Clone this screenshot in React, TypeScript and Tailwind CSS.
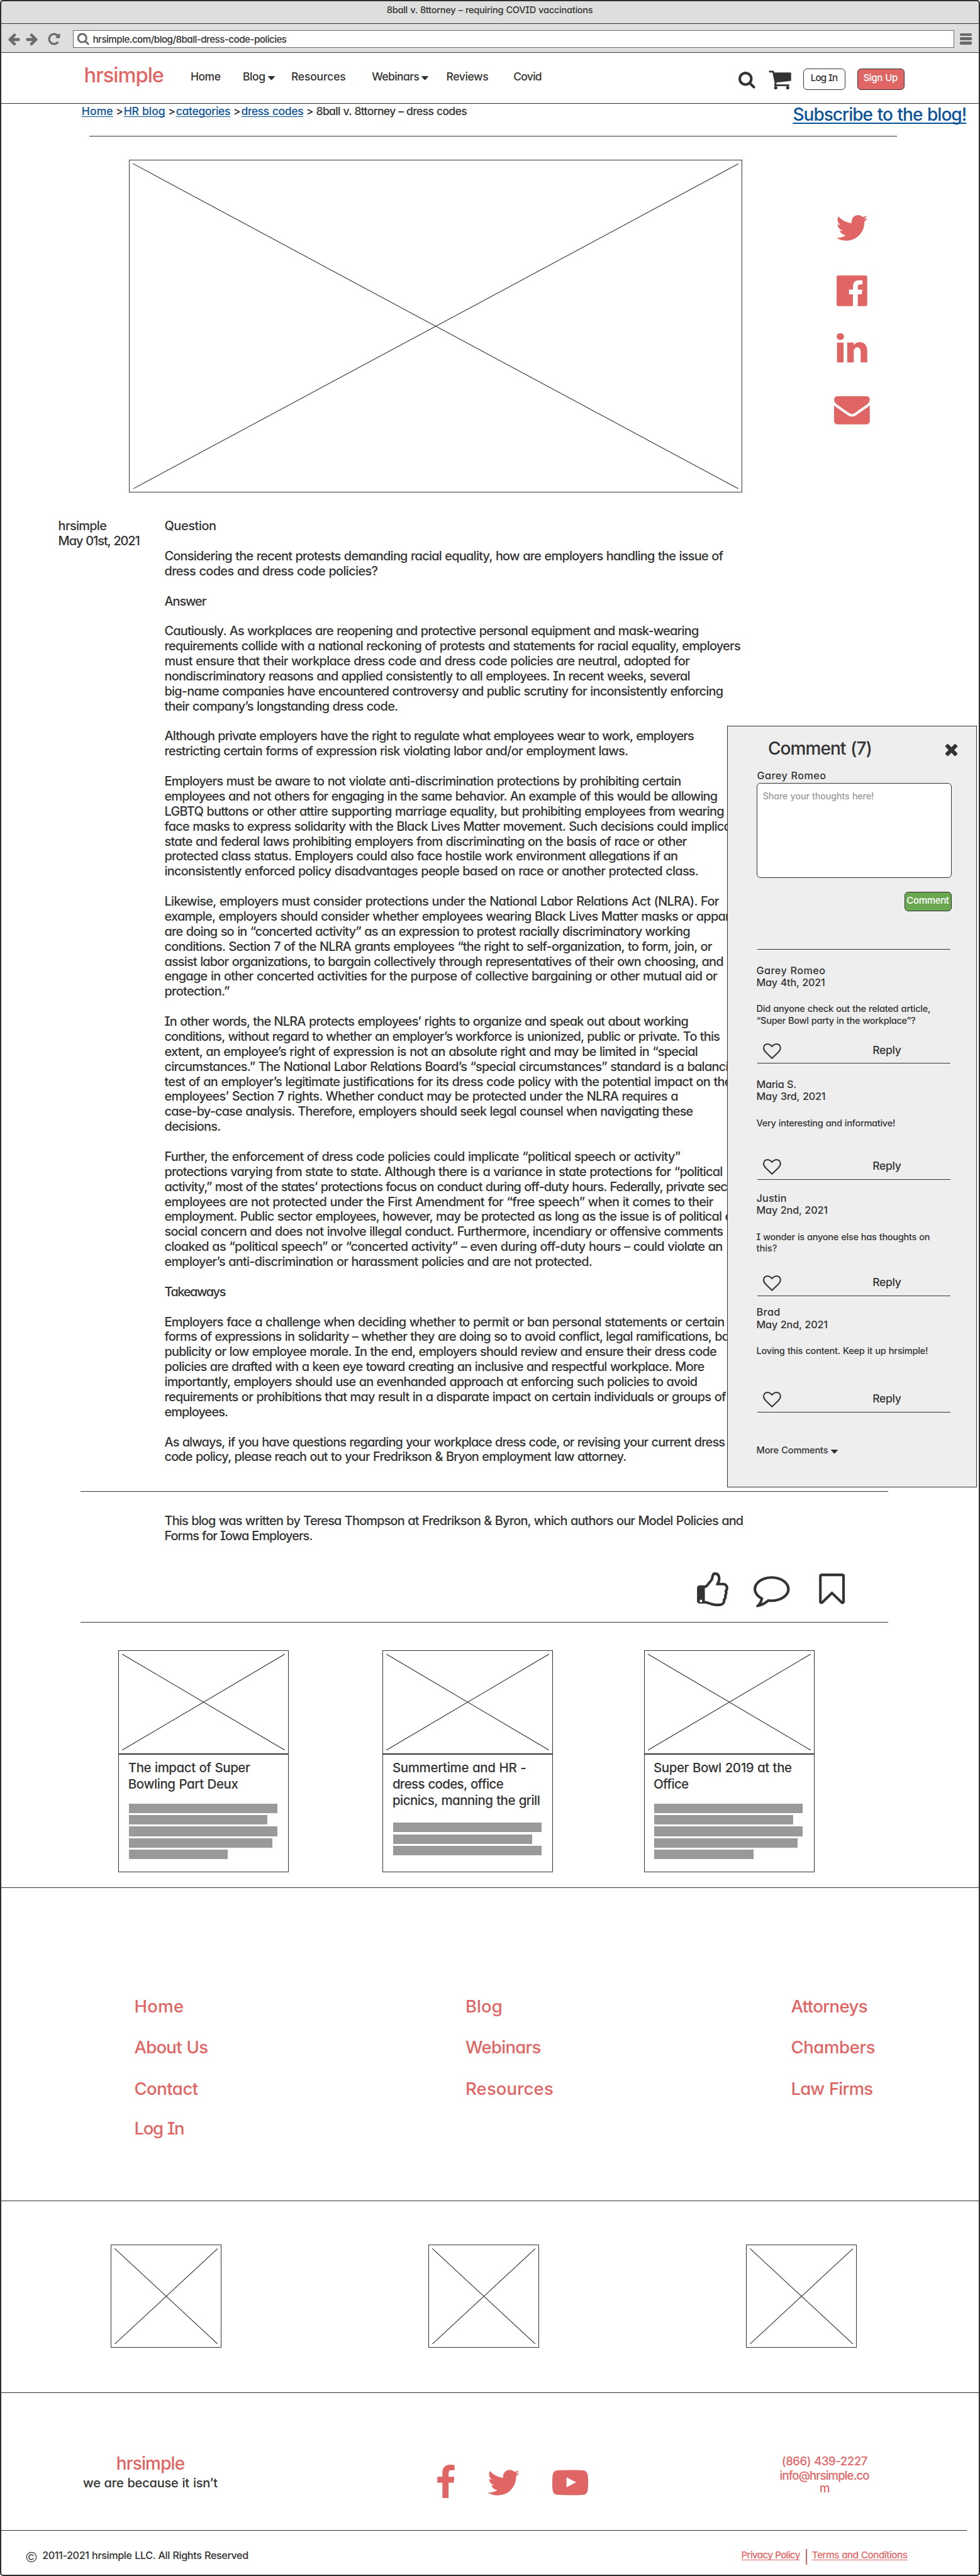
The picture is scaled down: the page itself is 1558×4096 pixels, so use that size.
import { useLayoutEffect, useRef } from "react";
import type { ReactNode } from "react";

const ICONS = {
  arrowLeft:
    "M1664 896v128q0 53-32.500 90.500t-84.500 37.500h-704l293 294q38 36 38 90t-38 90l-75 76q-37 37-90 37-52 0-91-37l-651-652q-37-37-37-90 0-52 37-91l651-650q38-38 91-38 52 0 90 38l75 74q38 38 38 91t-38 91l-293 293h704q52 0 84.500 37.500t32.500 90.500z",
  reload:
    "M1664 256v448q0 26-19 45t-45 19h-448q-42 0-59-40-17-39 14-69l138-138q-148-137-349-137-104 0-198.500 40.500t-163.500 109.500-109.500 163.500-40.500 198.500 40.500 198.500 109.500 163.500 163.500 109.500 198.500 40.500q119 0 225-52t179-147q7-10 23-12 15 0 25 9l137 138q9 8 9.500 20.500t-7.500 22.500q-109 132-264 204.500t-327 72.500q-156 0-298-61t-245-164-164-245-61-298 61-298 164-245 245-164 298-61q147 0 284.500 55.500t244.500 156.500l130-129q29-31 70-14 39 17 39 59z",
  search:
    "M1216 832q0-185-131.500-316.500t-316.500-131.500-316.500 131.500-131.500 316.500 131.500 316.500 316.500 131.500 316.500-131.500 131.500-316.500zm512 832q0 52-38 90t-90 38q-54 0-90-38l-343-342q-179 124-399 124-143 0-273.500-55.500t-225-150-150-225-55.500-273.500 55.500-273.500 150-225 225-150 273.500-55.500 273.500 55.500 225 150 150 225 55.500 273.500q0 220-124 399l343 343q37 37 37 90z",
  cart:
    "M704 1536q0 52-38 90t-90 38-90-38-38-90 38-90 90-38 90 38 38 90zm896 0q0 52-38 90t-90 38-90-38-38-90 38-90 90-38 90 38 38 90zm128-1088v512q0 24-16.500 42.500t-40.500 21.500l-1044 122q13 60 13 70 0 16-24 64h920q26 0 45 19t19 45-19 45-45 19h-1024q-26 0-45-19t-19-45q0-11 8-31.500t16-36 21.500-40 15.500-29.500l-177-823h-204q-26 0-45-19t-19-45 19-45 45-19h256q16 0 28.500 6.500t19.500 15.500 13 24.500 8 26 5.500 29.500 4.500 26h1201q26 0 45 19t19 45z",
  twitter:
    "M1684 408q-67 98-162 167 1 14 1 42 0 130-38 259.500t-115.500 248.500-184.500 210.500-258 146-323 54.500q-271 0-496-145 35 4 78 4 225 0 401-138-105-2-188-64.500t-114-159.500q33 5 61 5 43 0 85-11-112-23-185.500-111.500t-73.500-205.500v-4q68 38 146 41-66-44-105-115t-39-154q0-88 44-163 121 149 294.500 238.500t371.500 99.500q-8-38-8-74 0-134 94.500-228.500t228.500-94.500q140 0 236 102 109-21 205-78-37 115-142 178 93-10 186-50z",
  facebookSquare:
    "M1579 128q35 0 60 25t25 60v1366q0 35-25 60t-60 25h-391v-595h199l30-232h-229v-148q0-56 23.500-84t91.500-28l122-1v-207q-63-9-178-9-136 0-217.500 80t-81.500 226v171h-200v232h200v595h-735q-35 0-60-25t-25-60v-1366q0-35 25-60t60-25h1366z",
  linkedin:
    "M477 625v991h-330v-991h330zm21-306q1 73-50.500 122t-135.500 49h-2q-82 0-132-49t-50-122q0-74 51.500-122.500t134.500-48.500 133 48.500 51 122.500zm1166 729v568h-329v-530q0-105-40.500-164.500t-126.500-59.500q-63 0-105.500 34.500t-63.500 85.500q-11 30-11 81v553h-329q2-399 2-647t-1-296l-1-48h329v144h-2q20-32 41-56t56.500-52 87-43.500 114.500-15.500q171 0 275 113.500t104 332.500z",
  envelope:
    "M1792 710v794q0 66-47 113t-113 47h-1472q-66 0-113-47t-47-113v-794q44 49 101 87 362 246 497 345 57 42 92.500 65.500t94.500 48 110 24.500h2q51 0 110-24.500t94.500-48 92.500-65.500q170-123 498-345 57-39 100-87zm0-294q0 79-49 151t-122 123q-376 261-468 325-10 7-42.500 31t-54 38-52 31.500-57.500 27-50 9h-2q-23 0-50-9t-57.500-27-52-31.500-54-38-42.500-31q-91-64-262-182.500t-205-142.500q-62-42-117-115.500t-55-136.500q0-78 41.500-130t118.500-52h1472q65 0 112.500 47t47.500 113z",
  times:
    "M1490 1322q0 40-28 68l-136 136q-28 28-68 28t-68-28l-294-294-294 294q-28 28-68 28t-68-28l-136-136q-28-28-28-68t28-68l294-294-294-294q-28-28-28-68t28-68l136-136q28-28 68-28t68 28l294 294 294-294q28-28 68-28t68 28l136 136q28 28 28 68t-28 68l-294 294 294 294q28 28 28 68z",
  heart:
    "M1664 596q0-81-21.500-143t-55-98.500-81.500-59.500-94-31-98-8-112 25.500-110.500 64-86.500 72-60 61.500q-18 22-49 22t-49-22q-24-28-60-61.500t-86.500-72-110.500-64-112-25.500-98 8-94 31-81.500 59.500-55 98.500-21.500 143q0 168 187 355l581 560 580-559q188-188 188-356zm128 0q0 221-229 450l-623 600q-18 18-44 18t-44-18l-624-602q-10-8-27.500-26t-55.500-65.500-68-97.500-53.500-121-23.500-138q0-220 127-344t351-124q62 0 126.500 21.500t120 58 95.500 68.500 76 68q36-36 76-68t95.500-68.500 120-58 126.500-21.500q224 0 351 124t127 344z",
  thumb:
    "M384 1472q0-26-19-45t-45-19-45 19-19 45 19 45 45 19 45-19 19-45zm1152-640q0-51-39-89.500t-89-38.500h-352q0-58 48-159.500t48-160.500q0-98-32-145t-128-47q-26 26-38 85t-30.500 125.500-59.500 109.500q-22 23-77 91-4 5-23 30t-31.500 41-34.500 42.500-40 44-38.500 35.500-40 27-35.500 9h-32v640h32q13 0 31.500 3t33 6.500 38 11 35 11.500 35.500 12.500 29 10.500q211 73 342 73h121q192 0 192-167 0-26-5-56 30-16 47.500-52.500t17.500-73.500-18-69q53-50 53-119 0-25-10-55.500t-25-47.500q32-1 53.500-47t21.500-81zm128-1q0 89-49 163 9 33 9 69 0 77-38 144 3 21 3 43 0 101-60 178 1 139-85 219.500t-227 80.500h-129q-96 0-189.500-22.500t-216.500-65.500q-116-40-138-40h-288q-53 0-90.500-37.500t-37.500-90.500v-640q0-53 37.500-90.500t90.500-37.500h274q36-24 137-155 58-75 107-128 24-25 35.500-85.500t30.500-126.500 62-108q39-37 90-37 84 0 151 32.500t102 101.500 35 186q0 93-48 192h176q104 0 180 76t76 179z",
  comment:
    "M896 384q-204 0-381.500 69.500t-282 187.500-104.500 255q0 112 71.500 213.500t201.500 175.500l87 50-27 96q-24 91-70 172 152-63 275-171l43-38 57 6q69 8 130 8 204 0 381.500-69.500t282-187.500 104.500-255-104.500-255-282-187.500-381.500-69.500zm896 512q0 174-120 321.500t-326 233-450 85.500q-70 0-145-8-198 175-460 242-49 14-114 22h-5q-15 0-27-10.500t-16-27.500v-1q-3-4-.5-12t2-10 4.500-9.500l6-9 7-8.500 8-9q7-8 31-34.500t34.500-38 31-39.500 32.500-51 27-59 26-76q-157-89-247.500-220t-90.500-281q0-130 71-248.500t191-204.500 286-136.500 348-50.500 348 50.500 286 136.500 191 204.500 71 248.500z",
  bookmark:
    "M1408 256h-1024v1242l423-406 89-85 89 85 423 406v-1242zm12-128q23 0 44 9 33 13 52.500 41t19.500 62v1289q0 34-19.500 62t-52.500 41q-19 8-44 8-48 0-83-32l-441-424-441 424q-36 33-83 33-23 0-44-9-33-13-52.500-41t-19.500-62v-1289q0-34 19.500-62t52.500-41q21-9 44-9h1048z",
  facebook:
    "M1343 12v264h-157q-86 0-116 36t-30 108v189h293l-39 296h-254v759h-306v-759h-255v-296h255v-218q0-186 104-288.500t277-102.500q147 0 228 12z",
  youtube:
    "M711 1128l484-250-484-253v503zm185-862q168 0 324.500 4.500t229.500 9.500l73 4q1 0 17 1.500t23 3 23.500 4.500 28.500 8 28 13 31 19.500 29 26.500q6 6 15.500 18.500t29 58.500 26.500 101q8 64 12.500 136.500t5.500 113.500v40 136q1 145-18 290-7 55-25 99.500t-32 61.500l-14 17q-14 15-29 26.500t-31 19-28 12.500-28.500 8-24 4.500-23 3-16.500 1.500q-251 19-627 19-207-2-359.500-6.500t-200.500-7.500l-49-4-36-4q-36-5-54.500-10t-51-21-56.500-41q-6-6-15.500-18.500t-29-58.500-26.500-101q-8-64-12.500-136.500t-5.500-113.500v-40-136q-1-145 18-290 7-55 25-99.500t32-61.500l14-17q14-15 29-26.500t31-19.500 28-13 28.500-8 23.500-4.500 23-3 17-1.500q251-18 627-18z",
};

function Icon({ name, className = "" }: { name: keyof typeof ICONS; className?: string }) {
  return (
    <svg viewBox="0 0 1792 1792" fill="currentColor" className={"block shrink-0 overflow-visible " + className}>
      <path d={ICONS[name]} />
    </svg>
  );
}

/** One line of text, tracked so that its ink spans `w` pixels. */
function T({ w, className = "", ink = "", children }: { w: number; className?: string; ink?: string; children: string }) {
  const ref = useRef<HTMLSpanElement>(null);
  useLayoutEffect(() => {
    const el = ref.current;
    if (!el || children.length < 2) return;
    el.style.letterSpacing = "0px";
    const natural = el.getBoundingClientRect().width;
    const size = parseFloat(getComputedStyle(el).fontSize);
    el.style.letterSpacing = (w + size * 0.1 - natural) / (children.length - 1) + "px";
  }, [w, children]);
  return (
    <span className={"block shrink-0 whitespace-nowrap " + className} style={{ width: w }}>
      <span ref={ref} className={"-ml-px [word-spacing:.04em] " + ink}>
        {children}
      </span>
    </span>
  );
}

function CrossBox({ className = "" }: { className?: string }) {
  return (
    <div className={"shrink-0 p-[5px] " + className}>
      <svg viewBox="0 0 100 100" preserveAspectRatio="none" className="block size-full" stroke="#333" strokeWidth="1.1">
        <path d="M0 0L100 100M100 0L0 100" vectorEffect="non-scaling-stroke" />
      </svg>
    </div>
  );
}

function Caret({ className = "" }: { className?: string }) {
  return (
    <svg viewBox="0 0 22 13" className={"block h-[6.5px] w-[11px] shrink-0 " + className} fill="currentColor">
      <path d="M1.500 0H20.500Q22.500 .8 21 2.600L12.400 11.800Q11 13.200 9.600 11.800L1 2.600Q-.5 .8 1.500 0Z" />
    </svg>
  );
}

function Chrome() {
  return (
    <div className="bg-[#dededc]">
      <div className="flex h-[38px] justify-center border-b border-[#333] pt-[6.500px] text-[14.6px] leading-[19px]">
        <T w={326.5}>8ball v. 8ttorney – requiring COVID vaccinations</T>
      </div>
      <div className="flex h-[46px] border-b border-[#333] pt-[10px] text-[#6a6a6a]">
        <Icon name="arrowLeft" className="mt-[3px] ml-[11px] size-[22px]" />
        <Icon name="arrowLeft" className="mt-[3px] ml-[7px] size-[22px] -scale-x-100" />
        <Icon name="reload" className="mt-[3px] ml-[13px] size-[22px]" />
        <div className="ml-[19px] flex h-[28px] w-[1401px] border border-[#6a6a6a] bg-white">
          <Icon name="search" className="mt-[2px] ml-[5px] size-[20.5px]" />
          <div className="mt-[4px] ml-[6px] text-[15.2px] leading-[19px] text-[#333]">
            <T w={307}>hrsimple.com/blog/8ball-dress-code-policies</T>
          </div>
        </div>
        <div className="mt-[4.500px] ml-[9px] flex flex-col gap-[2.300px]">
          <span className="h-[4.700px] w-[19px] rounded-[1.500px] bg-[#6a6a6a]" />
          <span className="h-[4.700px] w-[19px] rounded-[1.500px] bg-[#6a6a6a]" />
          <span className="h-[4.700px] w-[19px] rounded-[1.500px] bg-[#6a6a6a]" />
        </div>
      </div>
    </div>
  );
}

function Nav() {
  return (
    <nav className="flex h-[81px] border-b border-[#333] text-[17.500px] leading-[24px]">
      <T w={124.2} className="mt-[15px] ml-[134.600px] text-[32.700px] leading-[40px] text-[#e06666]">hrsimple</T>
      <div className="mt-[25.500px] ml-[45.200px] flex">
        <T w={46.2}>Home</T>
        <T w={34.3} className="ml-[36.800px]">Blog</T>
        <Caret className="mt-[11.500px] ml-[4.500px]" />
        <T w={85} className="ml-[27.200px]">Resources</T>
        <T w={74} className="ml-[43.200px]">Webinars</T>
        <Caret className="mt-[11.500px] ml-[3.500px]" />
        <T w={65.5} className="ml-[29.800px]">Reviews</T>
        <T w={43.7} className="ml-[41.300px]">Covid</T>
      </div>
      <Icon name="search" className="mt-[27.500px] ml-[312.500px] size-[28.600px]" />
      <Icon name="cart" className="mt-[23px] ml-[18.500px] size-[38.100px]" />
      <div className="mt-[25px] ml-[18.600px] flex h-[34px] w-[67px] justify-center rounded-[6px] border border-[#333] pt-[4.300px] text-[15.200px] leading-[20px]">
        <T w={41.7}>Log In</T>
      </div>
      <div className="mt-[25px] ml-[18.500px] flex h-[34px] w-[75px] justify-center rounded-[6px] border border-[#333] bg-[#e06666] pt-[4.300px] text-[15.200px] leading-[20px] text-white">
        <T w={53.6}>Sign Up</T>
      </div>
    </nav>
  );
}

const link = "text-[#0b5394] underline decoration-[1.200px] underline-offset-[2px] [text-decoration-skip-ink:none]";

function Crumbs() {
  return (
    <div className="flex h-[51px] pl-[130.700px] text-[17.500px] leading-[24px]">
      <T w={48.2} ink={link}>Home</T>
      <T w={7} className="ml-[6.400px]">&gt;</T>
      <T w={64.1} className="ml-[5.400px]" ink={link}>HR blog</T>
      <T w={6.5} className="ml-[6.500px]">&gt;</T>
      <T w={85} className="ml-[5.900px]" ink={link}>categories</T>
      <T w={7} className="ml-[6.300px]">&gt;</T>
      <T w={97.4} className="ml-[5.500px]" ink={link}>dress codes</T>
      <T w={254} className="ml-[6px]">&gt; 8ball v. 8ttorney – dress codes</T>
      <T
        w={274}
        className="ml-[519.600px] text-[28px] leading-[34px] text-[#0b5394]"
        ink="underline decoration-2 underline-offset-[3px] [text-decoration-skip-ink:none]"
      >
        Subscribe to the blog!
      </T>
    </div>
  );
}

function Hero() {
  return (
    <div className="flex h-[566px]">
      <CrossBox className="mt-[36.500px] ml-[204.700px] h-[529.500px] w-[975.600px] border border-[#333]" />
      <div className="ml-[145.700px] flex flex-col text-[#e06666]">
        <Icon name="twitter" className="mt-[117.300px] size-[56.800px]" />
        <Icon name="facebookSquare" className="mt-[42.800px] size-[56.800px]" />
        <Icon name="linkedin" className="mt-[34.600px] size-[56.800px]" />
        <Icon name="envelope" className="mt-[39.800px] size-[56.800px]" />
      </div>
    </div>
  );
}

const BODY: ([string, number] | null)[] = [
  ["Question", 80.6],
  null,
  ["Considering the recent protests demanding racial equality, how are employers handling the issue of", 886.6],
  ["dress codes and dress code policies?", 337.6],
  null,
  ["Answer", 64.9],
  null,
  ["Cautiously. As workplaces are reopening and protective personal equipment and mask-wearing", 847.8],
  ["requirements collide with a national reckoning of protests and statements for racial equality, employers", 914.2],
  ["must ensure that their workplace dress code and dress code policies are neutral, adopted for", 833.2],
  ["nondiscriminatory reasons and applied consistently to all employees. In recent weeks, several", 834],
  ["big-name companies have encountered controversy and public scrutiny for inconsistently enforcing", 886.6],
  ["their company’s longstanding dress code.", 369.6],
  null,
  ["Although private employers have the right to regulate what employees wear to work, employers", 840.3],
  ["restricting certain forms of expression risk violating labor and/or employment laws.", 735.5],
  null,
  ["Employers must be aware to not violate anti-discrimination protections by prohibiting certain", 819.8],
  ["employees and not others for engaging in the same behavior. An example of this would be allowing", 877.6],
  ["LGBTQ buttons or other attire supporting marriage equality, but prohibiting employees from wearing", 888.1],
  ["face masks to express solidarity with the Black Lives Matter movement. Such decisions could implicate", 916],
  ["state and federal laws prohibiting employers from discriminating on the basis of race or other", 828.8],
  ["protected class status. Employers could also face hostile work environment allegations if an", 814.6],
  ["inconsistently enforced policy disadvantages people based on race or another protected class.", 847.4],
  null,
  ["Likewise, employers must consider protections under the National Labor Relations Act (NLRA). For", 879.9],
  ["example, employers should consider whether employees wearing Black Lives Matter masks or apparel", 912],
  ["are doing so in “concerted activity” as an expression to protest racially discriminatory working", 834],
  ["conditions. Section 7 of the NLRA grants employees “the right to self-organization, to form, join, or", 869],
  ["assist labor organizations, to bargain collectively through representatives of their own choosing, and", 887],
  ["engage in other concerted activities for the purpose of collective bargaining or other mutual aid or", 877.3],
  ["protection.”", 101.8],
  null,
  ["In other words, the NLRA protects employees’ rights to organize and speak out about working", 831.3],
  ["conditions, without regard to whether an employer’s workforce is unionized, public or private. To this", 881.3],
  ["extent, an employee’s right of expression is not an absolute right and may be limited in “special", 846.3],
  ["circumstances.” The National Labor Relations Board’s “special circumstances” standard is a balancing", 918],
  ["test of an employer’s legitimate justifications for its dress code policy with the potential impact on the", 900],
  ["employees’ Section 7 rights. Whether conduct may be protected under the NLRA requires a", 815],
  ["case-by-case analysis. Therefore, employers should seek legal counsel when navigating these", 838.8],
  ["decisions.", 87.7],
  null,
  ["Further, the enforcement of dress code policies could implicate “political speech or activity”", 818.7],
  ["protections varying from state to state. Although there is a variance in state protections for “political", 885.8],
  ["activity,” most of the states’ protections focus on conduct during off-duty hours. Federally, private sector", 917],
  ["employees are not protected under the First Amendment for “free speech” when it comes to their", 870.9],
  ["employment. Public sector employees, however, may be protected as long as the issue is of political or", 908],
  ["social concern and does not involve illegal conduct. Furthermore, incendiary or offensive comments", 886.6],
  ["cloaked as “political speech” or “concerted activity” – even during off-duty hours – could violate an", 885.8],
  ["employer’s anti-discrimination or harassment policies and are not protected.", 678.4],
  null,
  ["Takeaways", 95.9],
  null,
  ["Employers face a challenge when deciding whether to permit or ban personal statements or certain", 888.8],
  ["forms of expressions in solidarity – whether they are doing so to avoid conflict, legal ramifications, bad", 908],
  ["publicity or low employee morale. In the end, employers should review and ensure their dress code", 876.1],
  ["policies are drafted with a keen eye toward creating an inclusive and respectful workplace. More", 856.7],
  ["importantly, employers should use an evenhanded approach at enforcing such policies to avoid", 845.5],
  ["requirements or prohibitions that may result in a disparate impact on certain individuals or groups of", 891],
  ["employees.", 99.6],
  null,
  ["As always, if you have questions regarding your workplace dress code, or revising your current dress", 889.5],
  ["code policy, please reach out to your Fredrikson & Bryon employment law attorney.", 732.9],
];

function Article() {
  return (
    <div className="flex h-[1588px] pt-[42.200px] text-[19.900px] leading-[23.880px]">
      <div className="ml-[93.600px] w-[168.900px] shrink-0">
        <T w={75.3}>hrsimple</T>
        <T w={128.2}>May 01st, 2021</T>
      </div>
      <div>
        {BODY.map((line, i) => (
          <div key={i} className="h-[23.880px]">
            {line && <T w={line[1]}>{line[0]}</T>}
          </div>
        ))}
      </div>
    </div>
  );
}

function Credits() {
  return (
    <div className="ml-[128px] h-[209px] w-[1283.500px] border-y border-[#333] pt-[34px]">
      <div className="ml-[134.500px] text-[19.900px] leading-[24.200px]">
        <T w={918.6}>This blog was written by Teresa Thompson at Fredrikson & Byron, which authors our Model Policies and</T>
        <T w={233.9}>Forms for Iowa Employers.</T>
      </div>
      <div className="mt-[44px] flex pl-[976px]">
        <Icon name="thumb" className="size-[58px]" />
        <Icon name="comment" className="ml-[36.400px] size-[57.500px]" />
        <Icon name="bookmark" className="ml-[37.700px] size-[57.300px]" />
      </div>
    </div>
  );
}

function Card({ title, bars, className }: { title: [string, number][]; bars: number[]; className: string }) {
  return (
    <div className={"flex h-[353px] w-[271px] shrink-0 flex-col border border-[#333] " + className}>
      <CrossBox className="h-[163px] w-full" />
      <div className="flex flex-1 flex-col border-t-2 border-[#333] pt-[8.700px] pl-[15.400px]">
        <div className="text-[20.500px] leading-[25.700px]">
          {title.map(([text, w]) => (
            <T key={text} w={w}>{text}</T>
          ))}
        </div>
        <div className={"flex flex-col gap-[3.200px] " + (bars.length > 3 ? "mt-[18px]" : "mt-[23px]")}>
          {bars.map((w, i) => (
            <div key={i} className="h-[15.200px] bg-[#999]" style={{ width: w }} />
          ))}
        </div>
      </div>
    </div>
  );
}

function Related() {
  const five = [236.3, 220.7, 236.3, 228, 157.5];
  return (
    <div className="flex h-[422px] border-b border-[#333] pt-[43.500px]">
      <Card className="ml-[188.400px]" bars={five} title={[["The impact of Super", 192], ["Bowling Part Deux", 173]]} />
      <Card
        className="ml-[149.100px]"
        bars={[236.3, 220.7, 236.3]}
        title={[["Summertime and HR -", 210.9], ["dress codes, office", 174.8], ["picnics, manning the grill", 233]]}
      />
      <Card className="ml-[144.200px]" bars={five} title={[["Super Bowl 2019 at the", 218], ["Office", 54]]} />
    </div>
  );
}

function FooterLinks() {
  const cols: { at: string; items: [string, number][] }[] = [
    { at: "ml-[214.400px] w-[526.600px]", items: [["Home", 76], ["About Us", 114.9], ["Contact", 99], ["Log In", 77.5]] },
    { at: "w-[517.400px]", items: [["Blog", 56], ["Webinars", 117.6], ["Resources", 137]] },
    { at: "", items: [["Attorneys", 119.5], ["Chambers", 131.4], ["Law Firms", 128]] },
  ];
  return (
    <div className="flex h-[498px] border-b border-[#333] pt-[171.200px] text-[27.500px] leading-[34px] text-[#e06666]">
      {cols.map((c) => (
        <div key={c.items[0][0]} className={"flex shrink-0 flex-col gap-[31.200px] " + c.at}>
          {c.items.map(([text, w], i) => (
            <T key={text} w={w} className={i === 3 ? "-mt-[2px]" : ""}>{text}</T>
          ))}
        </div>
      ))}
    </div>
  );
}

function Partners() {
  return (
    <div className="flex h-[305px] gap-[328.500px] border-b border-[#333] pt-[68.500px] pl-[175.800px]">
      <CrossBox className="h-[164.500px] w-[176.500px] border border-[#333]" />
      <CrossBox className="h-[164.500px] w-[176.500px] border border-[#333]" />
      <CrossBox className="h-[164.500px] w-[176.500px] border border-[#333]" />
    </div>
  );
}

function Brand() {
  return (
    <div className="flex h-[219px] w-[1537px] border-b border-[#333]">
      <div className="mt-[94.500px] ml-[133.100px] flex w-[212px] shrink-0 flex-col items-center">
        <T w={106.8} className="text-[28px] leading-[34px] text-[#e06666]">hrsimple</T>
        <T w={212} className="mt-[2px] text-[20px] leading-[24px]">we are because it isn’t</T>
      </div>
      <div className="mt-[114.200px] ml-[334.700px] flex shrink-0 text-[#e06666]">
        <Icon name="facebook" className="size-[57px]" />
        <Icon name="twitter" className="ml-[34.800px] size-[57px]" />
        <Icon name="youtube" className="ml-[49px] size-[57px]" />
      </div>
      <div className="mt-[97px] ml-[305.500px] flex w-[142px] shrink-0 flex-col items-center text-[18.500px] leading-[22.800px] text-[#e06666]">
        <T w={134.6}>(866) 439-2227</T>
        <T w={141}>info@hrsimple.co</T>
        <T w={14} className="-mt-[3px]">m</T>
      </div>
    </div>
  );
}

function Legal() {
  const legalLink = "underline decoration-[1.200px] underline-offset-[2px] [text-decoration-skip-ink:none]";
  return (
    <div className="flex h-[72px] pt-[29px] text-[16.200px] leading-[20px]">
      <svg viewBox="0 0 18 18" className="mt-[3.500px] ml-[41.200px] block size-[18px]" fill="none" stroke="currentColor" strokeLinecap="round">
        <circle cx="9" cy="9" r="7.700" strokeWidth="1.200" />
        <path d="M12 6.800A3.900 3.900 0 1 0 12 11.200" strokeWidth="1.500" />
      </svg>
      <T w={326.4} className="ml-[9px]">2011-2021 hrsimple LLC. All Rights Reserved</T>
      <div className="ml-[784.900px] flex text-[15.200px] text-[#e06666]">
        <T w={92.4} ink={legalLink}>Privacy Policy</T>
        <span className="ml-[9px] h-[24.500px] w-[2px] bg-[#e06666]" />
        <T w={150.5} className="ml-[9px]" ink={legalLink}>Terms and Conditions</T>
      </div>
    </div>
  );
}

function Comment({ name, date, lines, className }: { name: [string, number]; date: [string, number]; lines: [string, number][]; className: string }) {
  return (
    <div className={"flex w-[307.600px] flex-col border-b border-[#333] " + className}>
      <div className="text-[16.200px] leading-[19.100px]">
        <T w={name[1]}>{name[0]}</T>
        <T w={date[1]}>{date[0]}</T>
      </div>
      <div className="mt-[23.500px] text-[14.600px] leading-[18.200px]">
        {lines.map(([text, w]) => (
          <T key={text} w={w}>{text}</T>
        ))}
      </div>
      <div className="mt-auto flex pb-[4.800px]">
        <Icon name="heart" className="ml-[9px] size-[28.800px]" />
        <T w={44} className="ml-[146.900px] pt-[1px] text-[17.500px] leading-[24px]">Reply</T>
      </div>
    </div>
  );
}

function Panel({ children }: { children?: ReactNode }) {
  return (
    <aside className="absolute top-[1154px] left-[1155.500px] h-[1211px] w-[397px] border border-[#333] bg-[#eee] pl-[47px]">
      <div className="flex h-[68.500px]">
        <T w={163.2} className="mt-[18px] ml-[18.400px] text-[28px] leading-[34px]">Comment (7)</T>
        <Icon name="times" className="mt-[22px] ml-[113px] size-[29px]" />
      </div>
      <T w={107.9} className="ml-px text-[16.200px] leading-[19.100px]">Garey Romeo</T>
      <div className="mt-[2px] -ml-[.8px] h-[151.500px] w-[310.500px] rounded-[6px] border border-[#333] bg-white pt-[10.500px] pl-[10px] text-[14.200px] leading-[20px] text-[#999]">
        <T w={175.2}>Share your thoughts here!</T>
      </div>
      <div className="mt-[21.500px] ml-[234px] flex h-[31.200px] w-[75.700px] justify-center rounded-[6px] border border-[#333] bg-[#6aa84f] pt-[3px] text-[15px] leading-[20px] text-white">
        <T w={66.3}>Comment</T>
      </div>
      <div className="mt-[60px] h-px w-[307.600px] bg-[#333]" />
      {children}
      <div className="mt-[51.300px] flex text-[14.600px] leading-[18.200px]">
        <T w={112.6}>More Comments</T>
        <Caret className="mt-[8.500px] ml-[5px]" />
      </div>
    </aside>
  );
}

export default function App() {
  return (
    <div className="relative h-[4096px] w-[1558px] overflow-hidden bg-white font-medium text-[#333] [font-family:Inter,'Liberation_Sans',sans-serif] [font-feature-settings:'cv11','cv08']">
      <Chrome />
      <Nav />
      <Crumbs />
      <div className="ml-[141.600px] h-px w-[1284px] bg-[#333]" />
      <Hero />
      <Article />
      <Credits />
      <Related />
      <FooterLinks />
      <Partners />
      <Brand />
      <Legal />
      <Panel>
        <Comment
          className="h-[181.400px] pt-[23.900px]"
          name={["Garey Romeo", 107.9]}
          date={["May 4th, 2021", 107.6]}
          lines={[["Did anyone check out the related article,", 275.6], ["“Super Bowl party in the workplace”?", 251.7]]}
        />
        <Comment
          className="h-[184.800px] pt-[24.200px]"
          name={["Maria S.", 62]}
          date={["May 3rd, 2021", 108.4]}
          lines={[["Very interesting and informative!", 219.4]]}
        />
        <Comment
          className="h-[185.100px] pt-[20.100px]"
          name={["Justin", 46.3]}
          date={["May 2nd, 2021", 111.8]}
          lines={[["I wonder is anyone else has thoughts on", 274.6], ["this?", 31.4]]}
        />
        <Comment
          className="h-[184.600px] pt-[16.400px]"
          name={["Brad", 36.2]}
          date={["May 2nd, 2021", 111.8]}
          lines={[["Loving this content. Keep it up hrsimple!", 271.4]]}
        />
      </Panel>
      <div className="pointer-events-none absolute inset-0 rounded-[5px] border-2 border-[#2d2d2d]" />
    </div>
  );
}
